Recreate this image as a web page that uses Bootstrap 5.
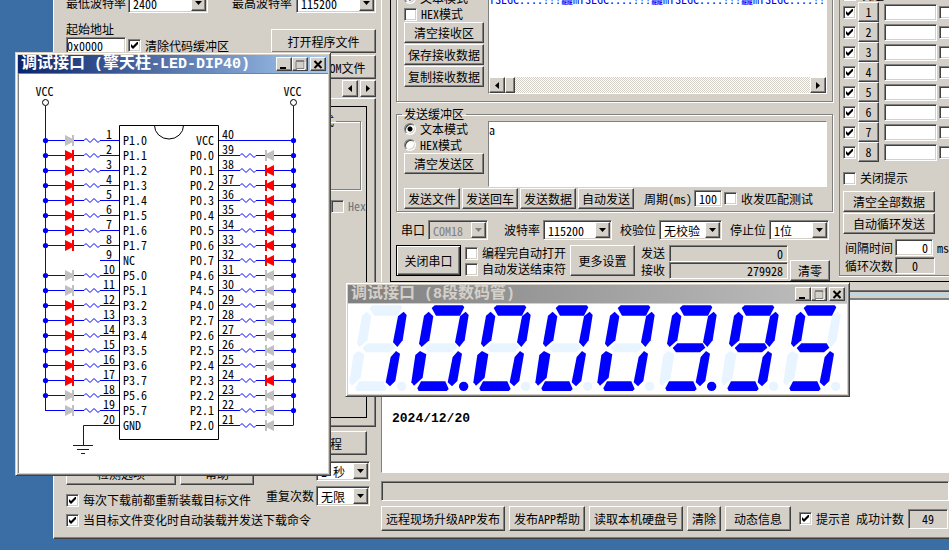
<!DOCTYPE html>
<html lang="zh-CN">
<head>
<meta charset="utf-8">
<meta name="viewport" content="width=device-width, initial-scale=1">
<title>调试接口</title>
<link rel="stylesheet" href="https://cdn.jsdelivr.net/npm/bootstrap@5.3.0/dist/css/bootstrap.min.css">
<style>
:root { --face:#d4d0c8; --shade:#808080; --dark:#404040; --sky:#b4d8ec; }
body { background:#3a6ea5; color:#000; font:12px/16px "Noto Sans Mono CJK SC","Noto Sans CJK SC","Liberation Sans",sans-serif; overflow:hidden; }
.desktop { min-height:100vh; padding:0 0 11px 53px; }
.app-frame { background:var(--face); border-left:1px solid #fff; border-bottom:1px solid var(--dark); box-shadow:inset 0 -1px var(--shade); }
button, input, select, textarea { font:inherit; color:inherit; border-radius:0; }
label, .txt { white-space:nowrap; line-height:16px; }

.key { background:var(--face); border:1px solid; border-color:#fff var(--dark) var(--dark) #fff; box-shadow:inset -1px -1px var(--shade); padding:0; height:21px; line-height:18px; white-space:nowrap; text-align:center; flex:none; border-radius:0; }
.key-tall { height:24px; line-height:21px; }
.key-main { height:31px; width:65px; }
.key-main.default { border-color:#000; box-shadow:inset 1px 1px #fff, inset -1px -1px var(--dark), inset -2px -2px var(--shade); }
.key svg { display:block; margin:auto; }
.sunk { background:#fff; border:1px solid; border-color:var(--shade) #fff #fff var(--shade); box-shadow:inset 1px 1px var(--dark), inset -1px -1px var(--face); padding:0 4px; height:17px; line-height:14px; min-width:0; }
.sunk.off { background:var(--face); }
.pick { position:relative; display:block; flex:none; height:20px; }
.pick select { appearance:none; width:100%; height:20px; padding:0 18px 0 4px; line-height:17px; display:block; }
.pick select:disabled { color:var(--shade); opacity:1; }
.pick::after { content:""; position:absolute; right:2px; top:2px; bottom:2px; width:15px; pointer-events:none; border:1px solid; border-color:#fff var(--dark) var(--dark) #fff; box-shadow:inset -1px -1px var(--shade); background:var(--face) url("data:image/svg+xml,%3Csvg xmlns='http://www.w3.org/2000/svg' width='7' height='4'%3E%3Cpath d='M0 0h7L3.5 4z'/%3E%3C/svg%3E") center no-repeat; }
.pick.dim::after { background-image:url("data:image/svg+xml,%3Csvg xmlns='http://www.w3.org/2000/svg' width='7' height='4'%3E%3Cpath fill='%23808080' d='M0 0h7L3.5 4z'/%3E%3C/svg%3E"); }
.tick { appearance:none; flex:none; width:13px; height:13px; margin:0; background:#fff center no-repeat; border:1px solid; border-color:var(--shade) #fff #fff var(--shade); box-shadow:inset 1px 1px var(--dark), inset -1px -1px var(--face); }
.tick:checked { background-image:url("data:image/svg+xml,%3Csvg xmlns='http://www.w3.org/2000/svg' width='7' height='7'%3E%3Cpath d='M0 2v3l2 2 5-5V-1L2 4z'/%3E%3C/svg%3E"); }
.tick.blank { background-color:var(--face); }
.tick[type=radio] { border-radius:50%; width:12px; height:12px; }
.tick[type=radio]:checked { background-image:radial-gradient(circle, #000 2px, transparent 3px); }

.side { width:327px; margin-top:-7px; padding:0 5px 10px 12px; }
.w54 { width:54px; } .w56 { width:56px; } .w60 { width:60px; } .w63 { width:63px; } .w69 { width:69px; } .w80 { width:80px; } .w105 { width:105px; } .w110 { width:110px; }
.w92 { width:92px; } .w40 { width:40px; } .w-0 { width:0; } .per { width:28px; }
.mt-px { margin-top:1px; } .mt-2px { margin-top:2px; } .py-px { padding-top:1px; padding-bottom:1px; } .ms-px { margin-left:2px; } .me-px { margin-right:2px; }
.gap-2px { gap:2px; } .gap-3px { gap:3px; } .pt-5px { padding-top:5px; } .pt-6px { padding-top:6px; } .pe-3px { padding-right:3px; } .ps-5px { padding-left:5px; } .me-9px { margin-right:9px; }

.tab-page { border:1px solid; border-color:#fff var(--dark) var(--dark) #fff; box-shadow:inset -1px -1px var(--shade); padding:7px 8px 8px 7px; min-height:200px; }
.tab-frame { border:1px solid #000; padding-top:7px; }
.etched { border:1px solid var(--shade); box-shadow:1px 1px #fff, inset 1px 1px #fff; padding:0; margin:0; min-width:0; }
.etched > legend { float:none; width:auto; font:inherit; line-height:14px; margin:0 0 0 -2px; padding:0 2px; }
.mode-box { margin-right:5px; height:76px; }
.mode-box > legend { margin:0 24px 0 auto; }
.spin { width:16px; height:17px; }

.port-edge { border-left:1px solid #fff; padding-left:8px; }
.port { border:solid #000; border-width:0 0 1px 1px; padding:0 0 0 5px; }
.rx { margin-top:-11px; min-height:113px; padding:0 5px 7px 7px; }
.tx { padding:0 5px 2px 7px; }
.blue-rule { height:1px; background:var(--sky); margin:3px 0 1px; }
.pane { border:1px solid; border-color:var(--shade) #fff #fff var(--shade); background:#fff; }
.pane textarea, textarea.pane { resize:none; outline:0; overflow:hidden; min-height:0; }
.pane textarea { border:0; color:#00f; }
.trough { height:16px; background:conic-gradient(#fff 25%, var(--face) 0 50%, #fff 0 75%, var(--face) 0) 0 0/2px 2px; }
.loop-edge { border-left:1px solid var(--sky); padding-left:3px; margin-left:2px; width:114px; }
.loop { margin-top:-13px; border:solid var(--shade); border-width:0 0 1px 1px; box-shadow:0 1px #fff; padding-left:3px; overflow:hidden; height:289px; }
.loop-head { height:15px; }
.slot { height:20px; }
.slot .key { width:21px; height:20px; }
.slot .sunk { width:53px; }
.slot-rule { width:1px; height:20px; background:var(--sky); margin:0 2px 0 3px; }
.mt-n { margin-top:-3px; }
.zero { margin-top:-2px; margin-left:2px; }
.log { font:bold 13px/16px "Liberation Mono",monospace; padding:111px 10px 0; border-width:1px 0 1px 1px; min-height:130px; }
.log-top { height:17px; border-bottom:1px solid var(--shade); background:linear-gradient(var(--shade),var(--dark)) 0 8px/100% 2px no-repeat, linear-gradient(var(--sky),var(--sky)) 0 12px/100% 1px no-repeat; }
.bar { height:20px; flex:none; } .foot { padding:5px 1px 7px 0; }
.f25 { height:25px; line-height:22px; } .beep { width:33px; } .okc { height:20px; }

.float-win { position:absolute; background:var(--face); border:1px solid; border-color:var(--face) var(--dark) var(--dark) var(--face); box-shadow:inset 1px 1px #fff, inset -1px -1px var(--shade); padding:2px; }
.float-win.led-map { left:15px; top:52px; }
.float-win.digits { left:345px; top:282px; }
.title-strip { height:18px; padding:0 2px 0 3px; font-family:"Liberation Mono","Noto Sans CJK SC",monospace; font-size:16px; font-weight:700; line-height:18px; color:#fff; background:linear-gradient(90deg,#0a246a,#a6caf0); white-space:pre; }
.title-strip .latin { font-size:15px; }
.digits .title-strip { color:var(--face); background:linear-gradient(90deg,#808080,#c0c0c0); }
.title-strip .key { width:16px; height:14px; }
.client { background:#fff; border:solid var(--shade); border-width:1px 0 0 1px; }
.digits .client { border-color:var(--face); border-left:0; }
.client svg { display:block; }
.wire { stroke:#00f; fill:none; }
</style>
<script src="https://cdn.jsdelivr.net/npm/bootstrap@5.3.0/dist/js/bootstrap.bundle.min.js"></script>
</head>
<body>
<div class="desktop position-relative d-flex flex-column">
 <main class="app-frame flex-grow-1 d-flex">
  <section class="side flex-shrink-0 d-flex flex-column">
   <div class="d-flex align-items-center">
    <label for="lo" class="w60 me-px">最低波特率</label><span class="pick w80"><select id="lo" class="sunk"><option>2400</option></select></span>
    <label for="hi" class="w60 ms-auto me-1">最高波特率</label><span class="pick w80"><select id="hi" class="sunk"><option>115200</option></select></span>
   </div>
   <div class="d-flex justify-content-between pt-2">
    <div>
     <label for="addr" class="d-block">起始地址</label>
     <div class="d-flex align-items-center">
      <input id="addr" class="sunk w60 px-0" value="0x0000"><input type="checkbox" class="tick ms-px me-1" id="clr" checked><label for="clr">清除代码缓冲区</label>
     </div>
    </div>
    <button class="key key-tall w105 mt-2">打开程序文件</button>
   </div>
   <button class="key key-tall w105 ms-auto mt-px">打开EEPROM文件</button>
   <div class="d-flex justify-content-end py-px">
    <button class="key spin" aria-label="左"><svg width="4" height="7"><path d="M4 0v7L0 3.5z"/></svg></button>
    <button class="key spin ms-px" aria-label="右"><svg width="4" height="7"><path d="M0 0v7l4-3.5z"/></svg></button>
   </div>
   <div class="tab-page flex-grow-1 d-flex flex-column">
    <div class="tab-frame flex-grow-1 overflow-hidden">
     <fieldset class="etched mode-box"><legend>下载方式</legend></fieldset>
     <div class="d-flex justify-content-end align-items-center pt-2 text-secondary"><input type="checkbox" class="tick blank me-1" id="hex"><label for="hex">Hex</label></div>
    </div>
   </div>
   <button class="key key-tall me-9px ms-auto mt-1 px-4">下载/编程</button>
   <div class="d-flex align-items-start pt-6px pe-1">
    <button class="key key-tall w110 me-1">检测选项</button><button class="key key-tall px-4">帮助</button>
    <span class="pick w54 ms-auto me-px"><select class="sunk" aria-label="重复延时"><option>1 秒</option></select></span>
   </div>
   <div class="d-flex align-items-start pe-1 mt-px">
    <div class="d-flex align-items-center pt-6px"><input type="checkbox" class="tick me-1" id="reload" checked><label for="reload">每次下载前都重新装载目标文件</label></div>
    <div class="d-flex align-items-center ms-auto me-px"><label for="rep">重复次数</label><span class="pick w54 ms-px"><select id="rep" class="sunk"><option>无限</option></select></span></div>
   </div>
   <div class="d-flex align-items-center pt-1">
    <input type="checkbox" class="tick me-1" id="auto" checked><label for="auto">当目标文件变化时自动装载并发送下载命令</label>
   </div>
  </section>

  <section class="flex-grow-1 d-flex flex-column overflow-hidden">
   <div class="port-edge"><div class="port d-flex">
    <div class="flex-grow-1">
     <div class="etched rx d-flex">
      <div class="w80 d-flex flex-column flex-shrink-0">
       <div class="d-flex align-items-center"><input type="radio" class="tick me-1" name="rxm" id="rt" checked><label for="rt">文本模式</label></div>
       <div class="d-flex align-items-center"><input type="checkbox" class="tick me-1" id="rh"><label for="rh">HEX模式</label></div>
       <button class="key">清空接收区</button><button class="key mt-px">保存接收数据</button><button class="key mt-px">复制接收数据</button>
      </div>
      <div class="pane flex-grow-1 d-flex flex-column ms-1">
       <textarea class="flex-grow-1 p-0 text-nowrap w-100" aria-label="接收缓冲区">fSEGC....!!!龘mfSEGC....!!!龘mfSEGC....!!!龘mfSEGC....!!</textarea>
       <div class="trough d-flex"><button class="key spin h-100" aria-label="左移"><svg width="4" height="7"><path d="M4 0v7L0 3.5z"/></svg></button><button class="key px-1 h-100 me-auto" aria-label="滑块"></button><button class="key spin h-100" aria-label="右移"><svg width="4" height="7"><path d="M0 0v7l4-3.5z"/></svg></button></div>
      </div>
     </div>
     <div class="blue-rule"></div>
     <fieldset class="etched tx">
      <legend>发送缓冲区</legend>
      <div class="d-flex">
       <div class="w80 d-flex flex-column flex-shrink-0">
        <div class="d-flex align-items-center"><input type="radio" class="tick me-1" name="txm" id="tt" checked><label for="tt">文本模式</label></div>
        <div class="d-flex align-items-center"><input type="radio" class="tick me-1" name="txm" id="th"><label for="th">HEX模式</label></div>
        <button class="key">清空发送区</button>
       </div>
       <textarea class="pane flex-grow-1 ms-1 px-0 py-0" rows="4" aria-label="发送缓冲区">a</textarea>
      </div>
      <div class="d-flex align-items-center mt-px gap-2px">
       <button class="key w56">发送文件</button><button class="key w56">发送回车</button><button class="key w56">发送数据</button><button class="key w56">自动发送</button>
       <label for="per" class="ps-2">周期(ms)</label><input id="per" class="sunk text-end per" value="100"><input type="checkbox" class="tick" id="match"><label for="match" class="ms-px">收发匹配测试</label>
      </div>
     </fieldset>
     <div class="d-flex align-items-center gap-2 pt-2 ps-5px">
      <div class="d-flex align-items-center gap-3px me-2"><label for="com">串口</label><span class="pick dim w60"><select id="com" class="sunk off" disabled><option>COM18</option></select></span></div>
      <div class="d-flex align-items-center gap-3px"><label for="baud">波特率</label><span class="pick w69"><select id="baud" class="sunk"><option>115200</option></select></span></div>
      <div class="d-flex align-items-center gap-3px"><label for="par">校验位</label><span class="pick w63"><select id="par" class="sunk"><option>无校验</option></select></span></div>
      <div class="d-flex align-items-center gap-3px"><label for="stop">停止位</label><span class="pick w60"><select id="stop" class="sunk"><option>1位</option></select></span></div>
     </div>
     <div class="d-flex pt-5px pe-3px gap-1">
      <button class="key key-main default">关闭串口</button>
      <div><div class="d-flex align-items-center"><input type="checkbox" class="tick me-1" id="o1"><label for="o1">编程完自动打开</label></div>
       <div class="d-flex align-items-center"><input type="checkbox" class="tick me-1" id="o2"><label for="o2">自动发送结束符</label></div></div>
      <button class="key key-main">更多设置</button>
      <div class="flex-grow-1 ms-px d-flex flex-column">
       <div class="d-flex"><label for="sent" class="me-1">发送</label><input id="sent" class="sunk off flex-grow-1 text-end w-0" value="0" readonly><span class="w40 ms-px"></span></div>
       <div class="d-flex"><label for="got" class="me-1">接收</label><input id="got" class="sunk off flex-grow-1 text-end w-0" value="279928" readonly><button class="key w40 zero">清零</button></div>
      </div>
     </div>
    </div>
    <div class="loop-edge flex-shrink-0"><div class="loop" id="loop">
     <div class="d-flex align-items-center loop-head"><input type="checkbox" class="tick" id="snd"><label for="snd" class="ms-1">发送</label></div>
     <div id="slots"></div>
     <div class="d-flex align-items-center py-2"><input type="checkbox" class="tick me-1" id="tip"><label for="tip">关闭提示</label></div>
     <button class="key w92 d-block mt-n">清空全部数据</button><button class="key w92 d-block mt-px">自动循环发送</button>
     <div class="d-flex align-items-center pt-5px"><label for="gap" class="ms-px">间隔时间</label><input id="gap" class="sunk w40 ms-px text-end" value="0"><span class="txt ms-1">ms</span></div>
     <div class="d-flex align-items-center mt-px"><label for="cyc" class="ms-px">循环次数</label><input id="cyc" class="sunk off w40 ms-px text-center" value="0" readonly></div>
    </div></div>
   </div></div>
   <div class="log-top"></div>
   <textarea class="pane log flex-grow-1" aria-label="信息">2024/12/20</textarea>
   <div class="sunk off bar mt-2" role="progressbar" aria-label="进度"></div>
   <div class="d-flex align-items-center gap-1 foot">
    <button class="key f25 px-1">远程现场升级APP发布</button><button class="key f25 px-1">发布APP帮助</button><button class="key f25 px-1">读取本机硬盘号</button><button class="key f25 px-1">清除</button><button class="key f25 px-2">动态信息</button>
    <input type="checkbox" class="tick ms-1" id="beep" checked><label for="beep" class="beep overflow-hidden">提示音</label>
    <label for="okc" class="ms-auto">成功计数</label><input id="okc" class="sunk off w40 okc text-center" value="49" readonly>
   </div>
  </section>
 </main>

 <section class="float-win led-map">
  <div class="title-strip d-flex align-items-center"><span class="me-auto">调试接口<span class="latin"> (</span>擎天柱<span class="latin">-LED-DIP40)</span></span>
   <button class="key" aria-label="最小化"><svg width="12" height="11"><path d="M2 8h6v2H2z"/></svg></button><button class="key me-px" disabled aria-label="最大化"><svg width="12" height="11"><path d="M2 1.5h8M2 2.5h8v7H2z" stroke="#808080" fill="none"/><path d="M3 10.5h8V3" stroke="#fff" fill="none"/></svg></button><button class="key" aria-label="关闭"><svg width="12" height="11"><path d="M2.5 2l7 7m0-7l-7 7" stroke="#000" stroke-width="2"/></svg></button>
  </div>
  <div class="client"><svg id="chip" width="309" height="399" viewBox="19 74 309 399" font-size="12"></svg></div>
 </section>

 <section class="float-win digits">
  <div class="title-strip d-flex align-items-center"><span class="me-auto">调试接口<span class="latin"> (8</span>段数码管<span class="latin">)</span></span>
   <button class="key" aria-label="最小化"><svg width="12" height="11"><path d="M2 8h6v2H2z"/></svg></button><button class="key me-px" disabled aria-label="最大化"><svg width="12" height="11"><path d="M2 1.5h8M2 2.5h8v7H2z" stroke="#808080" fill="none"/><path d="M3 10.5h8V3" stroke="#fff" fill="none"/></svg></button><button class="key" aria-label="关闭"><svg width="12" height="11"><path d="M2.5 2l7 7m0-7l-7 7" stroke="#000" stroke-width="2"/></svg></button>
  </div>
  <div class="client"><svg id="seg" width="499" height="90" viewBox="24 87 1497 270" role="img" aria-label="10.000995"></svg></div>
 </section>
</div>
<script>
// Quick-send slots
document.getElementById('slots').innerHTML = [1,2,3,4,5,6,7,8].map(n =>
 `<div class="slot d-flex align-items-center"><input type="checkbox" class="tick" id="s${n}" checked aria-label="${n}"><button class="key ms-px">${n}</button><span class="slot-rule"></span><input class="sunk flex-shrink-0" aria-label="数据 ${n}"><input type="checkbox" class="tick ms-px" aria-label="HEX ${n}"></div>`).join('');

// Chip diagram: pin label followed by its state; r = lit, g = unlit, - = bare pin
const L = 'P1.0g P1.1r P1.2r P1.3r P1.4r P1.5r P1.6r P1.7r NC- P5.0g P5.1g P3.2r P3.3r P3.4r P3.5r P3.6r P3.7r P5.6g P5.7g GND-'.split(' ');
const R = 'VCC- P0.0g P0.1r P0.2r P0.3r P0.4r P0.5r P0.6r P0.7r P4.6g P4.5g P4.0g P2.7g P2.6g P2.5g P2.4g P2.3r P2.2g P2.1g P2.0g'.split(' ');
const zig = 'l2 -2 4 4 4 -4 4 4 2 -2';
const col = { r: '#f00', g: '#c0c0c0' };
let s = '<g class="wire"><path d="M45.5 106V410.5M293.5 106V425.5"/></g>';
for (let i = 0; i < 20; i++) {
 const y = 140.5 + 15 * i, l = L[i], r = R[i];
 if (l.endsWith('-')) s += i == 8 ? `<path class="wire" d="M100 ${y}H119"/>` : `<path class="wire" d="M119 ${y}H83.5V445M73 445.5H93M77 449.5H89M81 453.5H85"/>`;
 else s += `<path class="wire" d="M45 ${y}H84${zig}H119"/><path fill="${col[l.slice(-1)]}" d="M65 ${y-5.5}L72 ${y-2}V${y-5.5}H74V${y+5.5}H72V${y+2}L65 ${y+5.5}z"/>`;
 if (i < 18 && i != 8) s += `<circle cx="45.5" cy="${y}" r="2.6" fill="#00f"/>`;
 if (i == 0) s += `<path class="wire" d="M219 ${y}H293"/>`;
 else s += `<path class="wire" d="M219 ${y}H240${zig}H293"/><path fill="${col[r.slice(-1)]}" d="M274 ${y-5.5}L267 ${y-2}V${y-5.5}H265V${y+5.5}H267V${y+2}L274 ${y+5.5}z"/>`;
 if (i < 19) s += `<circle cx="293.5" cy="${y}" r="2.6" fill="#00f"/>`;
 s += `<text x="109" y="${y-1.5}" text-anchor="middle">${i+1}</text><text x="222" y="${y-1.5}">${40-i}</text>`;
 s += `<text x="123" y="${y+4}">${l.slice(0,-1)}</text><text x="214" y="${y+4}" text-anchor="end">${r.slice(0,-1)}</text>`;
}
s += '<path d="M119.5 125.5H218.5V439.5H119.5zM154.5 125.5a14.5 13.5 0 0 0 29 0" fill="none" stroke="#000"/>';
for (const x of [45.5, 293.5]) s += `<circle cx="${x}" cy="102.5" r="3" fill="#fff" stroke="#000"/><text x="${x-1}" y="96" text-anchor="middle">VCC</text>`;
document.getElementById('chip').innerHTML = s;

// Seven-segment digits
const seg = {
 a: '89,99 98,91 182,91 187,97 174,122 102,122', b: '191,110 200,120 188,196 172,216 159,202 174,124',
 c: '168,228 180,236 166,318 150,334 137,322 152,246', d: '57,319 130,319 140,342 134,348 50,348 46,340',
 e: '54,228 73,238 62,308 36,332 28,322 40,240', f: '80,110 94,124 82,196 59,216 51,206 66,122',
 g: '68,219 82,205 158,205 166,218 150,232 78,232' };
const on = { 0: 'abcdef', 1: 'bc', 5: 'acdfg', 9: 'abcdfg' };
document.getElementById('seg').innerHTML = ['1','0.','0','0','0','9.','9','5'].map((t, i) =>
 `<g transform="translate(${186*i})">` + Object.keys(seg).map(k => `<polygon points="${seg[k]}" fill="${on[t[0]].includes(k) ? '#00f' : '#e8f4ff'}"/>`).join('') +
 `<circle cx="185" cy="334" r="14" fill="${t[1] ? '#00f' : '#e8f4ff'}"/></g>`).join('');
</script>
</body>
</html>
